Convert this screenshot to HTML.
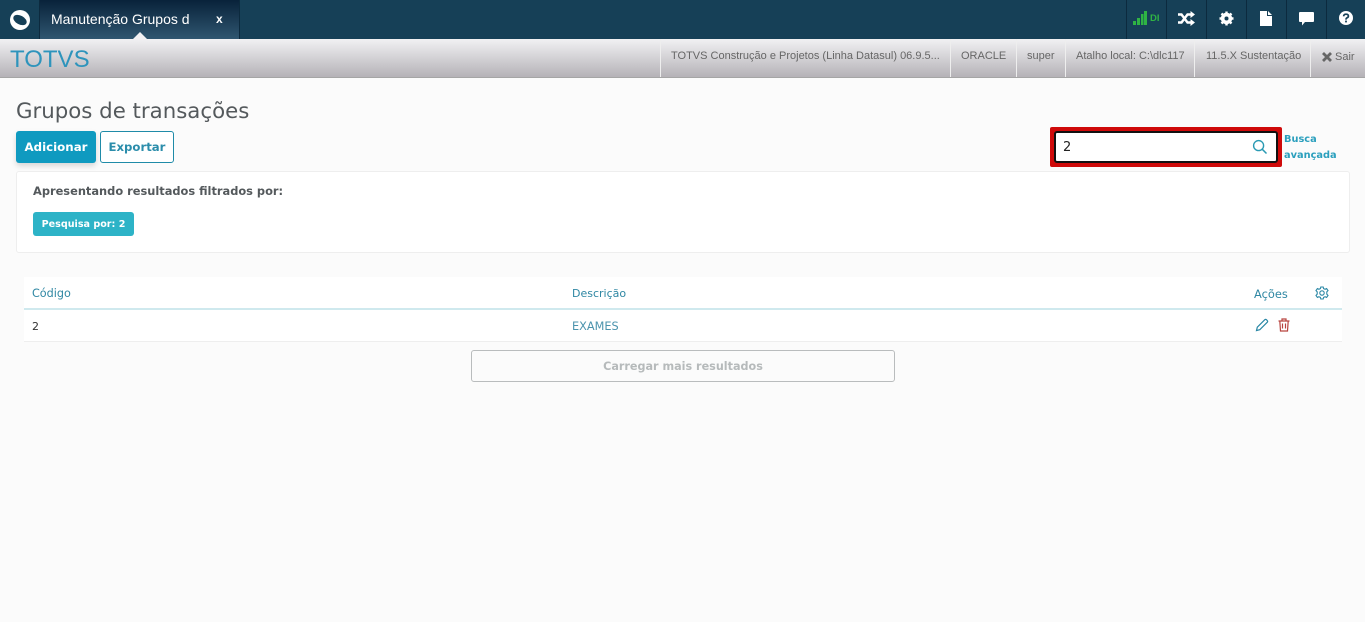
<!DOCTYPE html>
<html lang="pt">
<head>
<meta charset="utf-8">
<title>Grupos de transações</title>
<style>
html,body{margin:0;padding:0;width:1365px;height:622px;overflow:hidden;background:#fbfbfb;font-family:"Liberation Sans",sans-serif}
.a{position:absolute;white-space:nowrap}
#top{left:0;top:0;width:1365px;height:39px;background:#164057}
#tab{left:40px;top:0;width:199px;height:39px;background:linear-gradient(#08223a,#2f5670);border-right:1px solid #0c2a3e}
.sep{top:0;width:1px;height:39px;background:#0c2a3e}
#bar{left:0;top:39px;width:1365px;height:38px;background:linear-gradient(#f1f1f3,#b5b2b7);border-bottom:1px solid #a5a5a5}
.v{top:39px;width:1px;height:38px;background:#eeeeee}
.bt{top:50px;font-size:11px;color:#666;line-height:13px}
.g{font-family:"DejaVu Sans",sans-serif}
</style>
</head>
<body>
<div class="a" id="top"></div>
<div class="a" id="tab"></div>
<div class="a sep" style="left:39px"></div>
<svg class="a" style="left:8px;top:7.5px" width="24" height="24" viewBox="0 0 24 24"><circle cx="12" cy="12" r="10" fill="#fff"/><ellipse cx="12" cy="12" rx="7.2" ry="4.4" transform="rotate(28 12 12)" fill="#164057"/></svg>
<div class="a" style="left:51px;top:11px;font-size:14px;line-height:17px;color:#fff">Manutenção Grupos d</div>
<div class="a" style="left:216px;top:11px;font-size:12px;line-height:17px;font-weight:bold;color:#fff">x</div>
<div class="a" style="left:133px;top:32px;width:0;height:0;border-left:7px solid transparent;border-right:7px solid transparent;border-bottom:7px solid #f1f1f3"></div>

<div class="a sep" style="left:1126px"></div>
<div class="a sep" style="left:1166px"></div>
<div class="a sep" style="left:1206px"></div>
<div class="a sep" style="left:1246px"></div>
<div class="a sep" style="left:1286px"></div>
<div class="a sep" style="left:1326px"></div>
<svg class="a" style="left:1133px;top:10px" width="14" height="16"><g fill="#2fb344"><rect x="0" y="11" width="3" height="4"/><rect x="4" y="8" width="3" height="7"/><rect x="8" y="4" width="2.5" height="11"/><rect x="11" y="1" width="3" height="14"/></g></svg>
<div class="a" style="left:1150px;top:13px;font-size:9.5px;line-height:11px;font-weight:bold;color:#2fb344">DI</div>
<svg class="a" style="left:1178px;top:11px" width="17" height="15" viewBox="0 0 17 15"><path d="M0 3.5H3.5L9.5 11.5H13M0 11.5H3.5L9.5 3.5H13" fill="none" stroke="#fff" stroke-width="2.4"/><path d="M12.5 0L17 3.5L12.5 7ZM12.5 8L17 11.5L12.5 15Z" fill="#fff"/></svg>
<svg class="a" style="left:1219px;top:11px" width="15" height="15" viewBox="0 0 15 15"><circle cx="7.5" cy="7.5" r="4.2" fill="none" stroke="#fff" stroke-width="3"/><path d="M7.5 0.5V14.5M0.5 7.5H14.5M2.5 2.5L12.5 12.5M12.5 2.5L2.5 12.5" stroke="#fff" stroke-width="2.4"/><circle cx="7.5" cy="7.5" r="2" fill="#164057"/></svg>
<svg class="a" style="left:1260px;top:11px" width="12" height="15" viewBox="0 0 12 15"><path d="M0 0H7V5H12V15H0ZM8 0L12 4H8Z" fill="#fff"/></svg>
<svg class="a" style="left:1299px;top:12px" width="15" height="14" viewBox="0 0 15 14"><path d="M1 0H14Q15 0 15 1V9Q15 10 14 10H6L3 13.5V10H1Q0 10 0 9V1Q0 0 1 0Z" fill="#fff"/></svg>
<svg class="a" style="left:1339px;top:11px" width="14" height="14" viewBox="0 0 14 14"><circle cx="7" cy="7" r="7" fill="#fff"/><path d="M4.6 5.3Q4.8 3.2 7 3.2Q9.4 3.2 9.4 5.1Q9.4 6.2 8 6.9Q7 7.4 7 8.6" fill="none" stroke="#164057" stroke-width="1.7"/><rect x="6.1" y="9.6" width="1.8" height="1.8" fill="#164057"/></svg>

<div class="a" id="bar"></div>
<div class="a" style="left:10px;top:46px;font-size:24px;line-height:28px;color:#2e94bc">TOTVS</div>
<div class="a v" style="left:660px"></div>
<div class="a bt" style="left:671px">TOTVS Construção e Projetos (Linha Datasul) 06.9.5...</div>
<div class="a v" style="left:950px"></div>
<div class="a bt" style="left:961px">ORACLE</div>
<div class="a v" style="left:1016px"></div>
<div class="a bt" style="left:1027px">super</div>
<div class="a v" style="left:1065px"></div>
<div class="a bt" style="left:1076px">Atalho local: C:\dlc117</div>
<div class="a v" style="left:1194px"></div>
<div class="a bt" style="left:1206px">11.5.X Sustentação</div>
<div class="a v" style="left:1310px"></div>
<svg class="a" style="left:1322px;top:52px" width="10" height="10" viewBox="0 0 10 10"><path d="M1 1L9 9M9 1L1 9" stroke="#666" stroke-width="2.8"/></svg>
<div class="a bt" style="left:1335px;top:51px">Sair</div>

<div class="a g" style="left:16px;top:98px;font-size:21.3px;line-height:28px;color:#54595c">Grupos de transações</div>
<div class="a g" style="left:16px;top:131px;width:80px;height:32px;line-height:33px;background:#0f9ac0;border-radius:3px;box-shadow:0 3px 6px rgba(0,0,0,.15);color:#fff;font-size:11.8px;font-weight:bold;text-align:center">Adicionar</div>
<div class="a g" style="left:100px;top:131px;width:72px;height:30px;line-height:31px;background:#fff;border:1px solid #1f8ba8;border-radius:3px;color:#2b8dab;font-size:11.7px;font-weight:bold;text-align:center">Exportar</div>

<div class="a" style="left:1050px;top:127px;width:232px;height:40px;background:#cf0a0a;border-radius:2px"></div>
<div class="a" style="left:1054px;top:131px;width:220px;height:28px;background:#fff;border:2px solid #111;border-radius:3px"></div>
<div class="a g" style="left:1063px;top:140px;font-size:13px;line-height:16px;color:#222">2</div>
<svg class="a" style="left:1252px;top:139px" width="16" height="16" viewBox="0 0 16 16"><circle cx="6.6" cy="6.6" r="5" fill="none" stroke="#2a9ab3" stroke-width="1.4"/><path d="M10.3 10.3L14.5 14.5" stroke="#2a9ab3" stroke-width="1.5"/></svg>
<div class="a g" style="left:1284px;top:132px;font-size:9.8px;line-height:16px;color:#2a9fbd;font-weight:bold">Busca<br>avançada</div>

<div class="a" style="left:16px;top:171px;width:1332px;height:80px;background:#fff;border:1px solid #eee;border-radius:3px"></div>
<div class="a g" style="left:33px;top:183px;font-size:11.4px;line-height:16px;font-weight:bold;color:#54595c">Apresentando resultados filtrados por:</div>
<div class="a g" style="left:33px;top:212px;width:101px;height:24px;line-height:25px;background:#2db3c7;border-radius:3px;color:#fff;font-size:9.6px;font-weight:bold;text-align:center">Pesquisa por: 2</div>

<div class="a" style="left:24px;top:277px;width:1318px;height:31px;background:#fff"></div>
<div class="a" style="left:24px;top:308px;width:1318px;height:2px;background:#cfe9ee"></div>
<div class="a" style="left:24px;top:310px;width:1318px;height:31px;background:#fff;border-bottom:1px solid #eee"></div>
<div class="a g" style="left:32px;top:286px;font-size:11.2px;line-height:16px;color:#2f87a3">Código</div>
<div class="a g" style="left:572px;top:286px;font-size:11px;line-height:16px;color:#2f87a3">Descrição</div>
<div class="a g" style="left:1254px;top:286px;font-size:11.4px;line-height:16px;color:#2f87a3">Ações</div>
<svg class="a" style="left:1315px;top:286px" width="14" height="14" viewBox="0 0 14 14"><circle cx="7" cy="7" r="2.2" fill="none" stroke="#2a87a5" stroke-width="1.1"/><path d="M5.8 1H8.2L8.6 2.6L10.1 3.3L11.6 2.6L13 4.6L11.8 5.8V8.2L13 9.4L11.6 11.4L10.1 10.7L8.6 11.4L8.2 13H5.8L5.4 11.4L3.9 10.7L2.4 11.4L1 9.4L2.2 8.2V5.8L1 4.6L2.4 2.6L3.9 3.3L5.4 2.6Z" fill="none" stroke="#2a87a5" stroke-width="1.1"/></svg>
<div class="a g" style="left:32px;top:319px;font-size:11px;line-height:16px;color:#333">2</div>
<div class="a g" style="left:572px;top:319px;font-size:11.3px;line-height:16px;color:#4b93ad">EXAMES</div>
<svg class="a" style="left:1255px;top:318px" width="14" height="14" viewBox="0 0 14 14"><path d="M1.5 12.5L2.3 9.2L9.8 1.7Q10.6 1 11.4 1.7L12.3 2.6Q13 3.4 12.3 4.2L4.8 11.7Z" fill="none" stroke="#2a87a5" stroke-width="1.2"/></svg>
<svg class="a" style="left:1278px;top:318px" width="12" height="14" viewBox="0 0 12 14"><path d="M0.5 3H11.5M4 3V1H8V3M1.8 3L2.5 13H9.5L10.2 3M4.5 5.5V10.5M7.5 5.5V10.5" fill="none" stroke="#b8433f" stroke-width="1.2"/></svg>

<div class="a g" style="left:471px;top:350px;width:422px;height:30px;line-height:31px;background:#fbfbfb;border:1px solid #b9bcbd;border-radius:3px;color:#b6babb;font-size:11.2px;font-weight:bold;text-align:center">Carregar mais resultados</div>
</body>
</html>
